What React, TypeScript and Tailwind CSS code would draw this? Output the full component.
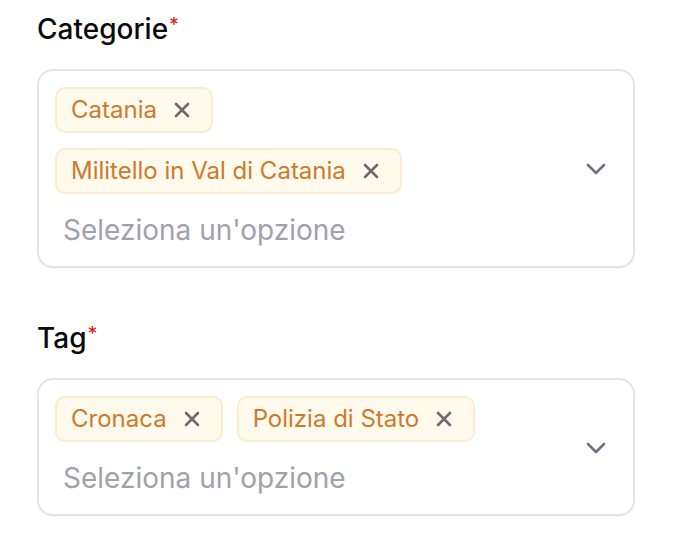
import React from 'react'

interface MultiSelectProps {
  label: string
  values: string[]
}

const XIcon = () => (
  <svg width="18" height="18" viewBox="0 0 18 18" fill="none" stroke="#6b6b6b" strokeWidth="2.6" strokeLinecap="round">
    <path d="M3 3l12 12M15 3L3 15" />
  </svg>
)

const Chevron = () => (
  <svg width="22" height="14" viewBox="0 0 22 14" fill="none" stroke="#6b7280" strokeWidth="2.6" strokeLinecap="round" strokeLinejoin="round">
    <path d="M3 3l8 8 8-8" />
  </svg>
)

const MultiSelect: React.FC<MultiSelectProps> = ({ label, values }) => {
  return (
    <div>
      <div className="text-[28px] leading-[34px] font-medium text-[#0a0a0a] mb-[23px]">
        {label}
        <sup className="text-[#dc2626] text-[19px] ml-[1px] relative top-[-8px]">*</sup>
      </div>
      <div className="flex items-center border-2 border-[#e4e4e7] rounded-[16px] pl-[16px] pr-[26px] pt-[16px] pb-[15px] shadow-[0_1px_2px_rgba(0,0,0,0.04)]">
        <div className="flex-1 mr-[40px]">
          <div className="flex flex-wrap gap-x-[14px] gap-y-[15px]">
            {values.map(v => (
              <span
                key={v}
                className="h-[46px] flex items-center gap-[16px] pl-[14px] pr-[20px] rounded-[10px] border-2 border-[#fbeccf] bg-[#fffaeb] text-[24px] text-[#cc7a2e]"
              >
                {v}
                <XIcon />
              </span>
            ))}
          </div>
          <div className="mt-[15px] pl-[8px] text-[28px] leading-[42px] text-[#a1a1aa]">
            Seleziona un'opzione
          </div>
        </div>
        <Chevron />
      </div>
    </div>
  )
}

export default function App() {
  return (
    <div className="w-[674px] h-[552px] bg-white pl-[37px] pr-[39px] pt-[12px]" style={{ fontFamily: 'Inter, "Noto Sans", sans-serif' }}>
      <MultiSelect label="Categorie" values={['Catania', 'Militello in Val di Catania']} />
      <div className="h-[53px]" />
      <MultiSelect label="Tag" values={['Cronaca', 'Polizia di Stato']} />
    </div>
  )
}
